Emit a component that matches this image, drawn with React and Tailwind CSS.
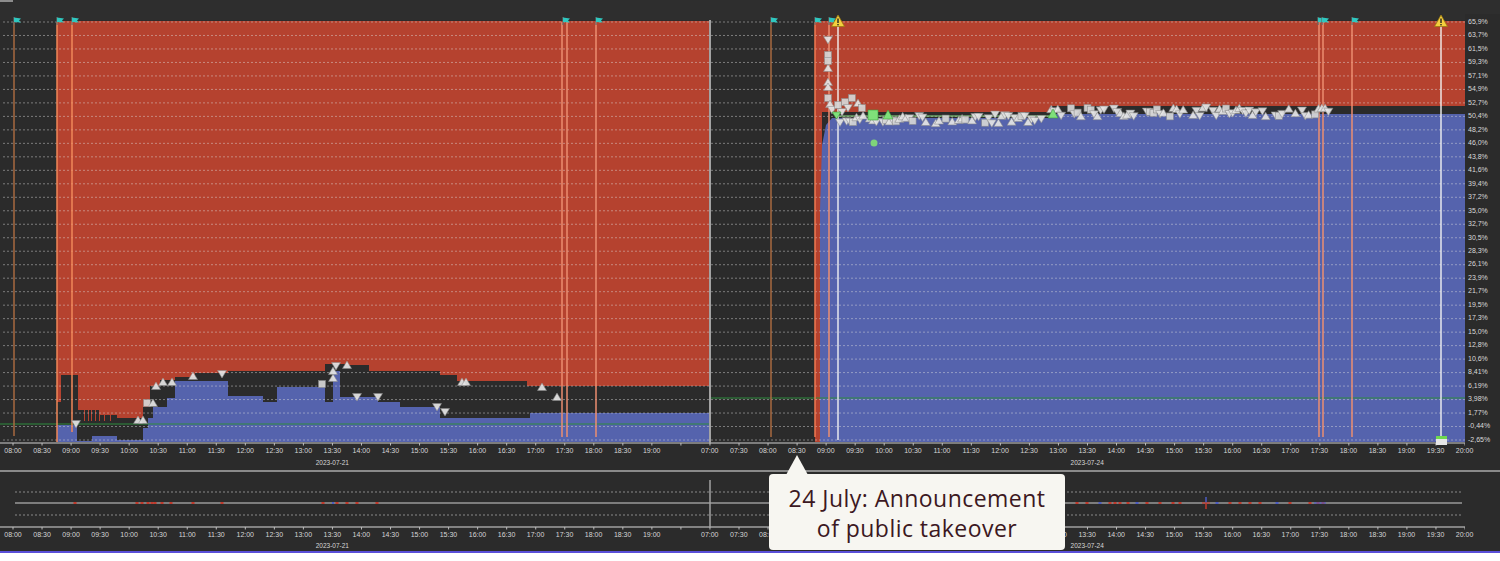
import React from 'react';

const Y_LABELS = ['65,9%', '63,7%', '61,5%', '59,3%', '57,1%', '54,9%', '52,7%', '50,4%', '48,2%', '46,0%', '43,8%', '41,6%', '39,4%', '37,2%', '35,0%', '32,7%', '30,5%', '28,3%', '26,1%', '23,9%', '21,7%', '19,5%', '17,3%', '15,0%', '12,8%', '10,6%', '8,41%', '6,19%', '3,98%', '1,77%', '-0,44%', '-2,65%'];

const STEP = 29.04;
const slotX = (i) => 13 + i * STEP;
const hhmm = (m) => `${String(Math.floor(m / 60)).padStart(2, '0')}:${m % 60 === 0 ? '00' : '30'}`;

const SLOTS = [];
for (let i = 0; i <= 50; i++) {
  if (i < 23) SLOTS.push(hhmm(480 + i * 30));
  else if (i === 23) SLOTS.push('');
  else SLOTS.push(hhmm(420 + (i - 24) * 30));
}
const DATES = { 11: '2023-07-21', 37: '2023-07-24' };

const GRID_Y = Y_LABELS.map((_, i) => 22 + i * 13.484);

// step outlines: [x0, x1, y]
const LEFT_BLACK = [[57, 61, 402], [61, 78, 375], [78, 100, 410], [100, 117, 415], [117, 143, 418], [143, 150, 407], [150, 160, 386], [160, 175, 380], [175, 195, 377], [195, 228, 373], [228, 325, 371], [325, 345, 364], [345, 369, 365], [369, 440, 371], [440, 457, 375], [457, 527, 381], [527, 710, 386]];
const LEFT_BLUE = [[57, 77, 425], [77, 92, 441], [92, 117, 436], [117, 143, 440], [143, 148, 428], [148, 153, 418], [153, 167, 407], [167, 175, 398], [175, 228, 381], [228, 263, 396], [263, 277, 402], [277, 325, 387], [325, 333, 402], [333, 340, 371], [340, 378, 397], [378, 400, 402], [400, 440, 407], [440, 530, 418], [530, 710, 413]];

const steps = (segs, bottom) => {
  const pts = [];
  segs.forEach(([a, b, y]) => pts.push(`${a},${y}`, `${b},${y}`));
  pts.push(`${segs[segs.length - 1][1]},${bottom}`, `${segs[0][0]},${bottom}`);
  return pts.join(' ');
};

const VLINES = [
  { x: 14, c: '#a86a40', y2: 436 },
  { x: 57, c: '#f0885a', y2: 442 },
  { x: 72, c: '#f0885a', y2: 432 },
  { x: 562, c: '#ec8e70', y2: 437 },
  { x: 567, c: '#ec8e70', y2: 437 },
  { x: 596, c: '#ec8e70', y2: 437 },
  { x: 771, c: '#a86a40', y2: 437 },
  { x: 815, c: '#f07a52', y2: 437 },
  { x: 829, c: '#ec8e70', y2: 437 },
  { x: 1319, c: '#ec8e70', y2: 437 },
  { x: 1323, c: '#ec8e70', y2: 437 },
  { x: 1352, c: '#ec8e70', y2: 437 },
];
const FLAGS = [14, 57, 72, 563, 596, 771, 815, 829, 1318, 1322, 1352];

const LEFT_MARKS = [
  ['u', 138, 420], ['u', 143, 420], ['s', 147, 403], ['u', 153, 403], ['u', 156, 386], ['u', 163, 382], ['u', 172, 382], ['u', 193, 376],
  ['d', 76, 424], ['d', 222, 374], ['s', 322, 384], ['u', 333, 378], ['u', 333, 371], ['d', 336, 366], ['u', 347, 365],
  ['d', 357, 397], ['d', 378, 397], ['d', 437, 407], ['d', 445, 412], ['u', 462, 382], ['u', 466, 382], ['u', 542, 387], ['u', 557, 397],
];

const COLUMN_MARKS = [
  ['d', 828, 40], ['s', 828, 55], ['s', 828, 61], ['u', 828, 68], ['u', 828, 82], ['u', 828, 87], ['s', 828, 98], ['u', 830, 104],
  ['d', 832, 110], ['s', 838, 105], ['s', 845, 102], ['s', 852, 98], ['u', 858, 103], ['d', 848, 108], ['s', 862, 108], ['d', 842, 112],
];

let seed = 11;
const rnd = () => {
  seed = (seed * 9301 + 49297) % 233280;
  return seed / 233280;
};
const BAND = [];
for (let x = 840; x < 1330; x += 3.3) {
  if (rnd() < 0.18) continue;
  const base = x < 1050 ? 119 : 112;
  const y = base + (rnd() - 0.5) * 9;
  const r = rnd();
  BAND.push([r < 0.45 ? 'd' : r < 0.8 ? 'u' : 's', +x.toFixed(1), +y.toFixed(1)]);
}

const LOW_LEFT = [75, 137, 142, 148, 152, 155, 162, 171, 193, 222, 323, 337, 347, 357, 377];
const LOW_RIGHT = [1077, 1087, 1100, 1110, 1115, 1120, 1128, 1137, 1147, 1160, 1173, 1180, 1217, 1230, 1240, 1250, 1260, 1277, 1290, 1310, 1318, 1323];

const Marker = ({ t, x, y }) => {
  const props = { fill: '#e6e6e6', stroke: '#8c8c8c', strokeWidth: 0.6, opacity: 0.92 };
  if (t === 'u') return <polygon points={`${x},${y - 4} ${x + 4.5},${y + 3.5} ${x - 4.5},${y + 3.5}`} {...props} />;
  if (t === 'd') return <polygon points={`${x - 4.5},${y - 3.5} ${x + 4.5},${y - 3.5} ${x},${y + 4}`} {...props} />;
  return <rect x={x - 3.5} y={y - 3.5} width="7" height="7" {...props} fill="#d6d6d6" />;
};

const Flag = ({ x }) => (
  <g>
    <line x1={x} y1={17} x2={x} y2={25} stroke="#666" strokeWidth="1.2" />
    <path d={`M${x},17.5 L${x + 7},18.5 L${x + 5},20.5 L${x + 7},22.5 L${x},22 Z`} fill="#2fc7bf" />
  </g>
);

const Warn = ({ x }) => (
  <g>
    <polygon points={`${x},15 ${x + 6.5},26.5 ${x - 6.5},26.5`} fill="#f4cf3f" stroke="#9c7a12" strokeWidth="0.8" strokeLinejoin="round" />
    <rect x={x - 0.7} y={18.5} width="1.4" height="4.5" fill="#222" />
    <rect x={x - 0.7} y={24} width="1.4" height="1.4" fill="#222" />
  </g>
);

const AxisLabels = ({ bottomDate }) => (
  <div className="flex ml-[-1.52px]">
    {SLOTS.map((s, i) => (
      <div key={i} className="w-[29.04px] shrink-0 flex flex-col items-center">
        <span className="h-[10px] leading-[10px] text-[7px] text-[#d6d6d6] whitespace-nowrap">{s}</span>
        {DATES[i] && (
          <span className={`${bottomDate ? 'mt-[1px]' : 'mt-[2px]'} leading-[9px] text-[6.5px] text-[#d6d6d6] whitespace-nowrap`}>{DATES[i]}</span>
        )}
      </div>
    ))}
  </div>
);

const Ticks = ({ y }) => (
  <g>
    {SLOTS.map((_, i) => (
      <line key={i} x1={slotX(i)} y1={y} x2={slotX(i)} y2={y + 2.5} stroke="#bdbdbd" strokeWidth="1" />
    ))}
  </g>
);

const App = () => {
  return (
    <div className="relative w-[1500px] h-[561px] overflow-hidden bg-white font-['Liberation_Sans',Arial,sans-serif]">
      <div className="h-[553px] bg-[#2b2b2b] border-b-2 border-[#5a4fd8] flex flex-col">
        <div className="h-[14px] bg-[#2e2e2e] shrink-0">
          <div className="w-[13px] h-[2px] bg-[#8c8c8c]" />
        </div>

        <div className="flex h-[432px] shrink-0">
          <svg width="1465" height="432" viewBox="0 14 1465 432" className="block shrink-0">
            <rect x="0" y="14" width="1465" height="6" fill="#2e2e2e" />
            <rect x="57" y="21" width="653" height="421" fill="#b5422f" />
            <polygon points={steps(LEFT_BLACK, 442)} fill="#2b2b2b" />
            {[84, 88, 91, 95, 99, 104, 110].map((x) => (
              <rect key={x} x={x} y={409} width="1" height={12} fill="#b5422f" />
            ))}
            <polygon points={steps(LEFT_BLUE, 442)} fill="#5563ad" />

            <rect x="815" y="21" width="650" height="421" fill="#b5422f" />
            <polygon points="822,112 1050,112 1050,106 1465,106 1465,442 822,442" fill="#2b2b2b" />
            <polygon points="820,442 820,210 822,145 826,125 832,118 1050,118 1050,114 1465,114 1465,442" fill="#5563ad" />

            {GRID_Y.map((y) => (
              <line key={y} x1="3" y1={y} x2="1465" y2={y} stroke="rgba(225,225,225,0.45)" strokeWidth="1" strokeDasharray="2 2" />
            ))}

            <line x1="0" y1="424" x2="710" y2="424" stroke="#2e8c3e" strokeWidth="1.2" />
            <line x1="710" y1="398" x2="1465" y2="398" stroke="#2e8c3e" strokeWidth="1.2" />
            <line x1="836" y1="116" x2="1050" y2="116" stroke="#8fe083" strokeWidth="1" />

            <line x1="0" y1="443" x2="1465" y2="443" stroke="#9a9a9a" strokeWidth="1.5" />
            <Ticks y={443} />
            <line x1="710" y1="20" x2="710" y2="444" stroke="#a3a3a3" strokeWidth="2" />
            <line x1="1465.5" y1="20" x2="1465.5" y2="444" stroke="#a3a3a3" strokeWidth="1" />

            {VLINES.map((l) => (
              <line key={l.x} x1={l.x} y1="22" x2={l.x} y2={l.y2} stroke={l.c} strokeWidth="1.5" />
            ))}
            <line x1="838" y1="24" x2="838" y2="440" stroke="#f2f2f2" strokeWidth="1.4" />
            <line x1="1441" y1="24" x2="1441" y2="440" stroke="#f2f2f2" strokeWidth="1.4" />

            {LEFT_MARKS.map(([t, x, y], i) => (
              <Marker key={`l${i}`} t={t} x={x} y={y} />
            ))}
            {BAND.map(([t, x, y], i) => (
              <Marker key={`b${i}`} t={t} x={x} y={y} />
            ))}
            {COLUMN_MARKS.map(([t, x, y], i) => (
              <Marker key={`c${i}`} t={t} x={x} y={y} />
            ))}

            <polygon points="832,112 841,112 836.5,119" fill="#7fe07a" stroke="#3f9a3f" strokeWidth="0.6" />
            <rect x="868" y="110" width="10" height="10" fill="#7fe07a" stroke="#3f9a3f" strokeWidth="0.6" />
            <polygon points="888,110 893,119 883,119" fill="#7fe07a" stroke="#3f9a3f" strokeWidth="0.6" />
            <polygon points="1053,109 1058,118 1048,118" fill="#7fe07a" stroke="#3f9a3f" strokeWidth="0.6" />
            <circle cx="874" cy="143" r="3.5" fill="#7fd47a" />
            <rect x="1436" y="437" width="11" height="8" fill="#e6e6e6" />
            <rect x="1436" y="436" width="11" height="3" fill="#6fd84f" />

            {FLAGS.map((x) => (
              <Flag key={x} x={x} />
            ))}
            <Warn x={838} />
            <Warn x={1441} />
          </svg>

          <div className="w-[35px] h-[426px] mt-[4px] pl-[3px] flex flex-col justify-between">
            {Y_LABELS.map((l) => (
              <span key={l} className="h-[8px] leading-[8px] text-[7px] text-[#dadada] whitespace-nowrap">{l}</span>
            ))}
          </div>
        </div>

        <div className="h-[24px] shrink-0">
          <AxisLabels />
        </div>

        <div className="h-[2px] bg-[#8a8a8a] shrink-0" />

        <svg width="1465" height="58" viewBox="0 472 1465 58" className="block shrink-0">
          <line x1="15" y1="492" x2="1462" y2="492" stroke="#8a8a8a" strokeWidth="1" strokeDasharray="2 2" />
          <line x1="15" y1="503" x2="1462" y2="503" stroke="#9a9a9a" strokeWidth="1.5" />
          <line x1="15" y1="515" x2="1462" y2="515" stroke="#8a8a8a" strokeWidth="1" strokeDasharray="2 2" />
          <line x1="0" y1="527" x2="1465" y2="527" stroke="#a0a0a0" strokeWidth="1.5" />
          <Ticks y={527} />
          <line x1="710" y1="480" x2="710" y2="527" stroke="#a3a3a3" strokeWidth="1.5" />
          {LOW_LEFT.map((x) => (
            <rect key={x} x={x - 1.5} y="502" width="3" height="2" fill="#c0392b" />
          ))}
          {LOW_RIGHT.map((x, i) => (
            <rect key={x} x={x - 1.5} y="502" width="3" height="2" fill={i % 5 === 2 ? '#4b5cc4' : '#c0392b'} />
          ))}
          <rect x="332" y="502" width="2" height="2" fill="#4b5cc4" />
          <line x1="1206" y1="497" x2="1206" y2="503" stroke="#4b5cc4" strokeWidth="1.5" />
          <line x1="1206" y1="503" x2="1206" y2="509" stroke="#c0392b" strokeWidth="1.5" />
          <line x1="1202" y1="503" x2="1210" y2="503" stroke="#c0392b" strokeWidth="1.2" />
          <line x1="1314" y1="503" x2="1326" y2="503" stroke="#4b5cc4" strokeWidth="1.2" />
        </svg>

        <div className="h-[21px] shrink-0">
          <AxisLabels bottomDate />
        </div>
      </div>

      <svg className="absolute left-[785px] top-[455px]" width="24" height="20" viewBox="0 0 24 20">
        <polygon points="12,0 23,20 1,20" fill="#f7f6f1" />
      </svg>
      <div className="absolute left-[769px] top-[474px] w-[296px] h-[76px] rounded-[4px] bg-[#f7f6f1] flex flex-col items-center justify-center pt-[2px] font-['Open_Sans',sans-serif] text-[23px] leading-[30px] tracking-[0.02em] text-[#3c1822]">
        <span>24 July: Announcement</span>
        <span>of public takeover</span>
      </div>
    </div>
  );
};

export default App;
